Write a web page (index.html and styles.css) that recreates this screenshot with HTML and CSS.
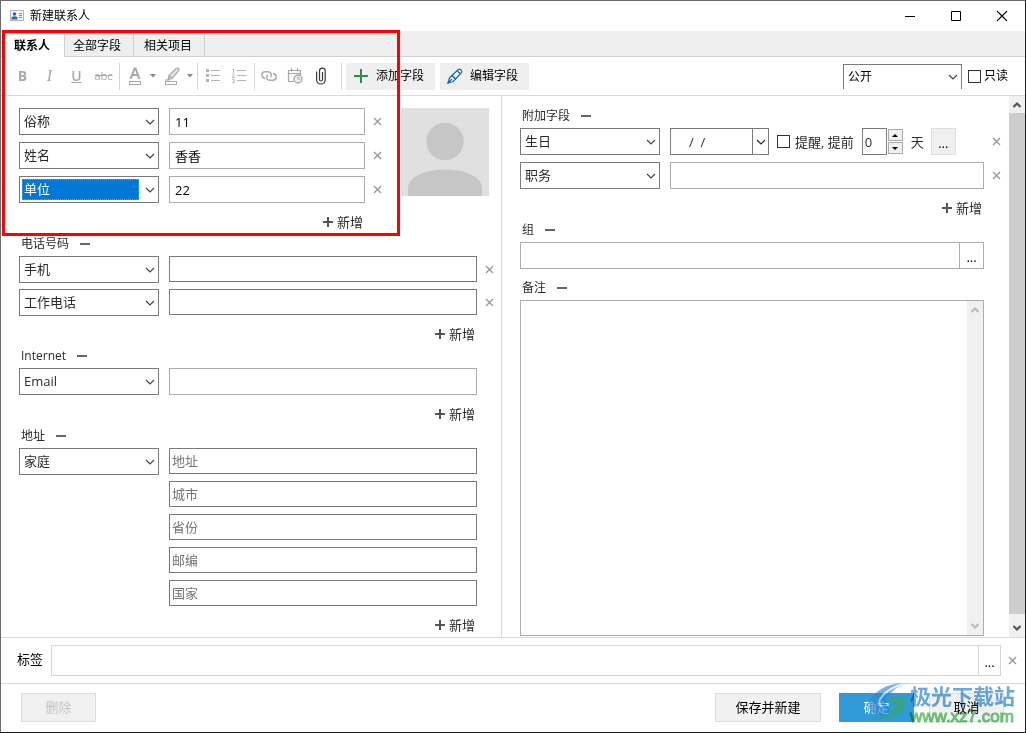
FILE: index.html
```html
<!DOCTYPE html>
<html lang="zh-CN">
<head>
<meta charset="utf-8">
<meta name="viewport" content="width=device-width, initial-scale=1">
<title>新建联系人</title>
<link rel="stylesheet" href="styles.css">
</head>
<body>
<svg width="0" height="0" class="defs" aria-hidden="true">
  <symbol id="chev" viewBox="0 0 10 6"><path d="M1 1l4 4 4-4" fill="none" stroke="currentColor" stroke-width="1.2"/></symbol>
  <symbol id="arrow-up" viewBox="0 0 10 8"><path d="M1.500 6L5 2.500 8.500 6" fill="none" stroke="currentColor" stroke-width="2.200"/></symbol>
  <symbol id="arrow-down" viewBox="0 0 10 8"><path d="M1.500 2L5 5.500 8.500 2" fill="none" stroke="currentColor" stroke-width="2.200"/></symbol>
  <symbol id="cross" viewBox="0 0 9 9"><path d="M1 1l7 7M8 1l-7 7" fill="none" stroke="currentColor" stroke-width="1.400"/></symbol>
  <symbol id="plus" viewBox="0 0 10 10"><path d="M5 0v10M0 5h10" fill="none" stroke="currentColor" stroke-width="2"/></symbol>
  <symbol id="caret" viewBox="0 0 6 4"><path d="M0 0h6L3 3.500z" fill="currentColor"/></symbol>
</svg>
<div class="window">
  <header class="titlebar">
    <svg class="app-icon" width="14" height="12" viewBox="0 0 14 12"><rect x=".5" y=".5" width="13" height="10" fill="#f4f4f4" stroke="#b5b5b5"/><circle cx="4.500" cy="4" r="1.800" fill="#2b6cb0"/><path d="M1.500 9.500V8q0-1.800 3-1.800T7.500 8v1.500z" fill="#2b6cb0"/><path d="M9 3.500h3M9 5.500h3M9 7.500h3" stroke="#8a8a8a"/></svg>
    <h1 class="title">新建联系人</h1>
    <button class="win-btn" aria-label="最小化"><svg width="12" height="12"><path d="M1 6.500h10" stroke="#000"/></svg></button>
    <button class="win-btn" aria-label="最大化"><svg width="12" height="12"><path d="M1.500 1.500h9v9h-9z" fill="none" stroke="#000"/></svg></button>
    <button class="win-btn" aria-label="关闭"><svg width="12" height="12"><path d="M1 1l10 10M11 1L1 11" stroke="#000" stroke-width="1.100"/></svg></button>
  </header>
  <nav class="tabs" role="tablist">
    <button class="tab tab-active" role="tab" aria-selected="true">联系人</button>
    <button class="tab" role="tab">全部字段</button>
    <button class="tab tab-last" role="tab">相关项目</button>
  </nav>
  <div class="toolbar">
    <button class="tool bold" aria-label="粗体"><b>B</b></button>
    <button class="tool italic" aria-label="斜体">I</button>
    <button class="tool underline" aria-label="下划线">U</button>
    <button class="tool strike" aria-label="删除线">abc</button>
    <span class="sep"></span>
    <button class="tool" aria-label="字体颜色"><svg width="14" height="20"><path d="M2.500 13L6.500 2.500h1L11.500 13M4.200 9h5.600" fill="none" stroke="#a9a9a9" stroke-width="2"/><rect x="1.500" y="15.500" width="11" height="3" fill="#fff" stroke="#a9a9a9"/></svg></button>
    <button class="tool tool-caret" aria-label="更多字体颜色"><svg width="6" height="4"><use href="#caret"/></svg></button>
    <button class="tool" aria-label="突出显示"><svg width="16" height="20"><path d="M4 13.500l1-4L12 2.500q1.500-1 2.500 0t0 2.500L8 12.500z" fill="#e2e2e2" stroke="#a9a9a9" stroke-width="1.200"/><path d="M5 9.500l3 3M1 14h4l1-1" fill="none" stroke="#a9a9a9" stroke-width="1.200"/><rect x="1.500" y="15.500" width="11" height="3" fill="#fff" stroke="#a9a9a9"/></svg></button>
    <button class="tool tool-caret" aria-label="更多突出显示"><svg width="6" height="4"><use href="#caret"/></svg></button>
    <span class="sep"></span>
    <button class="tool" aria-label="项目符号"><svg width="16" height="16"><path d="M1 2.500h3M1 7.500h3M1 12.500h3" stroke="#b4b4b4" stroke-width="3"/><path d="M6 2.500h9M6 7.500h9M6 12.500h9" stroke="#b4b4b4"/></svg></button>
    <button class="tool tool-narrow" aria-label="编号"><svg width="16" height="16"><path d="M1.500 1.500l1-.5v4M1 6.500q2-1.500 2.500 0L1 9.500h3M1 11.500q2.500-1 2.500.7l-1.500.8q2 .2 1.500 1.500-.8 1-2.500.2" fill="none" stroke="#b4b4b4" stroke-width=".9"/><path d="M6 2.500h9M6 7.500h9M6 12.500h9" stroke="#b4b4b4"/></svg></button>
    <span class="sep"></span>
    <button class="tool tool-narrow" aria-label="链接"><svg width="16" height="14" viewBox="0 0 16 14" fill="none" stroke="#ababab" stroke-width="1.400"><path d="M4 9.300A3.300 3.300 0 0 1 4.300 2.700H7a3.300 3.300 0 0 1 2.500 5.500"/><path d="M12 4.700a3.300 3.300 0 0 1-.3 6.600H9a3.300 3.300 0 0 1-2.500-5.500"/></svg></button>
    <button class="tool tool-narrow" aria-label="提醒"><svg width="16" height="18" fill="none" stroke="#a9a9a9"><path d="M7 14.500H1.500v-11h12V8M1.500 6.500h12M4.500 1v3.500M10.500 1v3.500" stroke-width="1.200"/><circle cx="11" cy="12" r="4" fill="#eee" stroke-width="1.300"/><path d="M11 9.500V12h2.500"/></svg></button>
    <button class="tool tool-narrow" aria-label="附件"><svg width="12" height="18" fill="none" stroke="#3b3b3b" stroke-width="1.200"><path d="M7.500 5v7.500a1.500 1.500 0 0 1-3 0V4a2.800 2.800 0 0 1 5.700 0v8.700a4.300 4.300 0 0 1-8.600 0V4.500"/></svg></button>
    <span class="sep sep-wide"></span>
    <button class="tool-btn"><svg width="14" height="14"><path d="M7 0v14M0 7h14" stroke="#2a8f45" stroke-width="2"/></svg>添加字段</button>
    <button class="tool-btn"><svg width="16" height="16" fill="#fff" stroke="#1667b0" stroke-width="1.300"><path d="M1 15l1.500-5L5 7.500 8.500 11 6 13.500z"/><path d="M5 7.500L11.300 1.600q1.300-1 2.600.3t.4 2.800L8.500 11z"/><path d="M1 15l4-4M10.500 3l3 3"/></svg>编辑字段</button>
    <div class="select select-public">
      <select aria-label="公开范围"><option>公开</option></select>
      <svg width="10" height="6"><use href="#chev"/></svg>
    </div>
    <label class="check"><input type="checkbox">只读</label>
  </div>

  <main class="body">
    <section class="panel panel-left">
      <div class="top">
        <div class="names">
          <div class="rows">
            <div class="row"><div class="select"><select aria-label="字段一"><option>俗称</option></select><svg width="10" height="6"><use href="#chev"/></svg></div><input class="field light" aria-label="俗称" value="11"><button class="remove" aria-label="移除"><svg width="9" height="9"><use href="#cross"/></svg></button></div>
            <div class="row"><div class="select"><select aria-label="字段二"><option>姓名</option></select><svg width="10" height="6"><use href="#chev"/></svg></div><input class="field light" aria-label="姓名" value="香香"><button class="remove" aria-label="移除"><svg width="9" height="9"><use href="#cross"/></svg></button></div>
            <div class="row"><div class="select select-focus"><select aria-label="字段三"><option>单位</option></select><svg width="10" height="6"><use href="#chev"/></svg></div><input class="field light" aria-label="单位" value="22"><button class="remove" aria-label="移除"><svg width="9" height="9"><use href="#cross"/></svg></button></div>
          </div>
          <button class="add"><svg width="10" height="10"><use href="#plus"/></svg>新增</button>
        </div>
        <svg class="avatar" width="88" height="88" role="img" aria-label="头像"><rect width="88" height="88" fill="#e0e0e0"/><circle cx="44" cy="33.500" r="18.700" fill="#c6c6c6"/><path d="M7 88V80C7 69 24 61.500 44 61.500S81 69 81 80v8z" fill="#c6c6c6"/></svg>
      </div>

      <h2 class="group">电话号码<i class="dash"></i></h2>
      <div class="rows rows-tight">
        <div class="row"><div class="select"><select aria-label="电话类型一"><option>手机</option></select><svg width="10" height="6"><use href="#chev"/></svg></div><input class="field short" aria-label="手机"><button class="remove" aria-label="移除"><svg width="9" height="9"><use href="#cross"/></svg></button></div>
        <div class="row"><div class="select"><select aria-label="电话类型二"><option>工作电话</option></select><svg width="10" height="6"><use href="#chev"/></svg></div><input class="field short" aria-label="工作电话"><button class="remove" aria-label="移除"><svg width="9" height="9"><use href="#cross"/></svg></button></div>
      </div>
      <button class="add add-tight"><svg width="10" height="10"><use href="#plus"/></svg>新增</button>

      <h2 class="group">Internet<i class="dash"></i></h2>
      <div class="row row-fixed"><div class="select"><select aria-label="Internet 类型"><option>Email</option></select><svg width="10" height="6"><use href="#chev"/></svg></div><input class="field light" aria-label="Email"></div>
      <button class="add"><svg width="10" height="10"><use href="#plus"/></svg>新增</button>

      <h2 class="group">地址<i class="dash"></i></h2>
      <div class="row row-fixed">
        <div class="select"><select aria-label="地址类型"><option>家庭</option></select><svg width="10" height="6"><use href="#chev"/></svg></div>
        <div class="rows address">
          <input class="field short" aria-label="地址" placeholder="地址">
          <input class="field short" aria-label="城市" placeholder="城市">
          <input class="field short" aria-label="省份" placeholder="省份">
          <input class="field short" aria-label="邮编" placeholder="邮编">
          <input class="field short" aria-label="国家" placeholder="国家">
        </div>
      </div>
      <button class="add"><svg width="10" height="10"><use href="#plus"/></svg>新增</button>
    </section>

    <section class="panel panel-right">
      <h2 class="group">附加字段<i class="dash"></i></h2>
      <div class="rows">
        <div class="row">
          <div class="select"><select aria-label="附加字段一"><option>生日</option></select><svg width="10" height="6"><use href="#chev"/></svg></div>
          <div class="date"><input aria-label="生日" value="/  /"><button aria-label="选择日期"><svg width="10" height="6"><use href="#chev"/></svg></button></div>
          <label class="check check-remind"><input type="checkbox">提醒, 提前</label>
          <div class="spin">
            <input aria-label="提前天数" value="0">
            <div class="spin-btns">
              <button aria-label="增加"><svg width="6" height="3"><path d="M3 0l3 3H0z"/></svg></button>
              <button aria-label="减少"><svg width="6" height="3"><path d="M0 0h6L3 3z"/></svg></button>
            </div>
          </div>
          <span class="unit">天</span>
          <button class="more more-box" aria-label="提醒选项">...</button>
          <button class="remove push" aria-label="移除"><svg width="9" height="9"><use href="#cross"/></svg></button>
        </div>
        <div class="row"><div class="select"><select aria-label="附加字段二"><option>职务</option></select><svg width="10" height="6"><use href="#chev"/></svg></div><input class="field light" aria-label="职务"><button class="remove" aria-label="移除"><svg width="9" height="9"><use href="#cross"/></svg></button></div>
      </div>
      <button class="add"><svg width="10" height="10"><use href="#plus"/></svg>新增</button>

      <h2 class="group">组<i class="dash"></i></h2>
      <div class="combo"><input aria-label="组"><button class="more" aria-label="选择组">...</button></div>

      <h2 class="group group-notes">备注<i class="dash"></i></h2>
      <div class="notes">
        <textarea aria-label="备注"></textarea>
        <div class="bar bar-off"><svg width="10" height="8"><use href="#arrow-up"/></svg><svg width="10" height="8"><use href="#arrow-down"/></svg></div>
      </div>
    </section>
    <div class="bar"><svg width="10" height="8"><use href="#arrow-up"/></svg><div class="thumb"></div><svg width="10" height="8"><use href="#arrow-down"/></svg></div>
  </main>

  <div class="tags">
    <label for="tags">标签</label>
    <div class="combo combo-tags"><input id="tags"><button class="more" aria-label="选择标签">...</button></div>
    <button class="remove" aria-label="清除标签"><svg width="9" height="9"><use href="#cross"/></svg></button>
  </div>

  <footer class="footer">
    <button class="btn" disabled>删除</button>
    <button class="btn btn-wide push">保存并新建</button>
    <button class="btn btn-primary">确定</button>
    <button class="btn">取消</button>
  </footer>

  <div class="highlight"></div>
  <div class="watermark wm-logo">
    <svg width="44" height="42" viewBox="0 0 44 42"><path d="M43 1Q30 4 23 13q-6 7-2 11 6 5 0 10-5 1-12-2Q-1 27 6 15 18 0 43 1z" fill="#2f86cf"/><path d="M41 1Q22 5 14 17q-2 5 2 8" fill="none" stroke="#c4ecff" stroke-width="2"/><path d="M20 18q14-7 19-1 3 7-5 14Q24 40 2 38q18-1 25-10 5-8-7-10z" fill="#3aa760"/></svg>
  </div>
  <div class="watermark wm-text"><span class="wm-name">极光下载站</span><span class="wm-url">www.xz7.com</span></div>
</div>
</body>
</html>
```
FILE: styles.css
```css
* { box-sizing: border-box; }

body {
  margin: 0;
  background: #fff;
  color: #2b2b2b;
  font-family: "Open Sans", "Noto Sans CJK SC", sans-serif;
  font-size: 13px;
  line-height: 20px;
}

button, input, select, textarea {
  margin: 0;
  padding: 0;
  border: 0;
  border-radius: 0;
  outline: 0;
  background: none;
  color: inherit;
  font: inherit;
}

svg { display: block; flex: none; }
.defs { position: absolute; }

.window {
  position: relative;
  display: flex;
  flex-direction: column;
  min-height: 100vh;
  border: 1px solid #1c1c1c;
  border-left-color: #6b6b6b;
  border-top-color: #6b6b6b;
}

/* Title bar */
.titlebar { display: flex; align-items: center; height: 30px; padding-left: 9px; }
.title { flex: 1; margin: 0 0 0 6px; color: #000; font-size: 12px; font-weight: 400; }
.win-btn { display: flex; align-items: center; justify-content: center; width: 46px; height: 30px; }

/* Tabs */
.tabs { display: flex; height: 26px; padding: 2px 0 0 4px; background: #efefef; border-bottom: 1px solid #d0d0d0; }
.tab { height: 23px; padding: 1px 12px 0 8px; border: 1px solid #d0d0d0; border-width: 1px 1px 0 0; color: #000; font-size: 12px; }
.tab-active { height: 24px; padding: 0 14px 0 9px; background: #fff; font-weight: 700; }
.tab-last { padding-left: 10px; }

/* Toolbar */
.toolbar { display: flex; align-items: center; height: 39px; padding: 0 17px 0 8px; border-bottom: 1px solid #d9d9d9; }
.tool { display: flex; align-items: center; justify-content: center; width: 27px; height: 27px; color: #a9a9a9; font-size: 14px; }
.italic { font-family: "Liberation Serif", serif; font-size: 16px; font-style: italic; }
.underline { text-decoration: underline; font-weight: 600; }
.strike { font-size: 11px; text-decoration: line-through; }
.tool-caret { width: 10px; color: #888; }
.tool-narrow { width: 26px; }
.sep { width: 1px; height: 27px; margin: 0 1px 0 2px; background: #d6d6d6; }
.sep-wide { margin-left: 7px; }
.sep-wide + .tool-btn { margin-left: 3px; }
.tool-btn { display: flex; align-items: center; gap: 8px; height: 27px; padding: 0 11px 0 8px; background: #efefef; color: #000; font-size: 12px; }
.tool-btn + .tool-btn { margin-left: 5px; padding-left: 7px; gap: 7px; }

/* Controls */
.select { display: grid; flex: none; align-items: center; width: 140px; height: 27px; border: 1px solid #7a7a7a; background: #fff; color: #2b2b2b; }
.select select { grid-area: 1 / 1; width: 100%; height: 25px; padding: 0 20px 2px 4px; appearance: none; }
.select svg { grid-area: 1 / 1; justify-self: end; margin-right: 3px; color: #444; pointer-events: none; }
.select-focus select { height: 21px; width: 117px; margin-left: 2px; padding-left: 2px; outline: 1px dotted #d88a2a; outline-offset: -1px; background: #0078d7; color: #fff; }
.select-public { width: 119px; height: 25px; margin-left: auto; border-bottom: 0; font-size: 12px; color: #000; }
.select-public select { height: 24px; padding-bottom: 0; }

.check { display: flex; align-items: center; gap: 3px; margin-left: 6px; color: #000; font-size: 12px; }
.check input { width: 13px; height: 13px; border: 1px solid #333; appearance: none; }
.check input:checked { background: #0078d7; }
.check-remind { gap: 5px; margin-left: 8px; color: #2b2b2b; font-size: 13px; }

.field { flex: 1; min-width: 0; height: 27px; padding: 0 5px; border: 1px solid #7a7a7a; color: #000; }
.light { border-color: #ababb0; }
.short { height: 26px; padding: 0 2px; }
.field::placeholder { color: #757575; opacity: 1; }
.remove { display: flex; flex: none; align-items: center; justify-content: center; width: 24px; height: 27px; color: #999; }
.push { margin-left: auto; }
.more { width: 24px; height: 100%; padding-top: 2px; color: #000; }

/* Body */
.body { display: flex; flex: 1; border-bottom: 1px solid #d9d9d9; }
.panel { display: flex; flex-direction: column; padding-left: 18px; min-width: 0; }
.panel-left { flex: 482 1 0; padding-top: 12px; padding-bottom: 2px; border-right: 1px solid #d9d9d9; }
.panel-right { flex: 488 1 0; padding: 8px 1px 1px 18px; }

.top { display: flex; gap: 12px; padding-right: 12px; }
.names { flex: 1; min-width: 0; display: flex; flex-direction: column; }
.rows { display: flex; flex-direction: column; gap: 7px; }
.rows-tight { gap: 6px; }
.row { display: flex; }
.row > .select { margin-right: 10px; }
.row-fixed { padding-right: 24px; }
.address { flex: 1; }
.address .field { flex: none; }

.add { display: flex; align-items: center; align-self: flex-end; gap: 4px; height: 20px; margin: 9px 26px 0 0; }
.add svg { color: #555; }
.add-tight { margin-top: 8px; }
.group { display: flex; align-items: center; gap: 11px; height: 24px; margin: 0; padding-left: 2px; font-size: 12px; font-weight: 400; }
.group-notes { margin-top: 7px; }
.dash { width: 10px; height: 2px; background: #666; }

.date { display: flex; width: 99px; height: 27px; border: 1px solid #7a7a7a; }
.date input { flex: 1; min-width: 0; padding-left: 18px; white-space: pre; }
.date button { display: flex; align-items: center; justify-content: center; width: 16px; border-left: 1px solid #7a7a7a; }
.spin { display: flex; gap: 1px; margin-left: 8px; }
.spin input { width: 25px; height: 27px; padding: 0 2px; border: 1px solid #7a7a7a; }
.spin-btns { display: grid; gap: 1px; width: 15px; padding: 1px 0; }
.spin-btns button { display: flex; align-items: center; justify-content: center; border: 1px solid #ababab; background: #f0f0f0; }
.unit { align-self: center; margin: 0 7px 0 8px; }
.more-box { width: 25px; height: 27px; border: 1px solid #ddd; background: #f0f0f0; }

.combo { display: flex; height: 27px; margin-right: 24px; border: 1px solid #ababb0; }
.combo input { flex: 1; min-width: 0; padding: 0 5px; }
.combo .more { border-left: 1px solid #ababb0; }

.notes { display: flex; flex: 1; margin-right: 24px; border: 1px solid #ababb0; }
.notes textarea { flex: 1; min-width: 0; padding: 4px; resize: none; }

.bar { display: flex; flex: none; flex-direction: column; align-items: center; justify-content: space-between; width: 16px; padding: 5px 0; background: #f0f0f0; color: #555; }
.bar-off { color: #bbb; }
.thumb { flex: 1; width: 100%; margin: 4px 0 10px; background: #cdcdcd; }

/* Tags and footer */
.tags { display: flex; align-items: center; height: 46px; padding-left: 16px; border-bottom: 1px solid #d9d9d9; color: #000; }
.tags label { width: 34px; padding-bottom: 3px; }
.combo-tags { flex: 1; height: 31px; margin-right: 0; border-color: #d6d6d6; }
.combo-tags .more { width: 22px; border-color: #d6d6d6; }
.tags .remove { width: 22px; margin-right: 2px; }
.footer { display: flex; align-items: center; gap: 15px; height: 48px; padding: 0 21px 2px 20px; }
.btn { width: 75px; height: 29px; border: 1px solid #ddd; background: #f1f1f1; color: #000; }
.btn:disabled { color: #c4c4c4; }
.btn-wide { width: 106px; }
.btn-primary { margin-left: 3px; border-color: #2f9bd8; background: #2f9bd8; color: #fff; }

/* Overlays */
.highlight { position: absolute; top: 29px; left: 1px; width: 398px; height: 206px; border: 3px solid #f00; pointer-events: none; }
.watermark { position: absolute; pointer-events: none; }
.wm-logo { right: 115px; bottom: 8px; opacity: 0.65; }
.wm-text { right: 9px; bottom: 6px; display: flex; flex-direction: column; width: 106px; white-space: nowrap; mix-blend-mode: multiply; }
.wm-name { color: #69a8dc; font-size: 21px; font-weight: 700; line-height: 24px; }
.wm-url { color: #74c67b; font-family: "Liberation Sans", sans-serif; font-size: 17px; line-height: 18px; -webkit-text-stroke: 1px #74c67b; }
```
